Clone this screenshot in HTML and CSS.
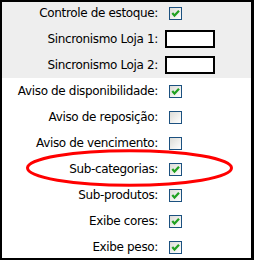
FILE: index.html
```html
<!DOCTYPE html>
<html>
<head>
<meta charset="utf-8">
<link rel="stylesheet" href="styles.css">
</head>
<body>
<div class="frame">
  <div class="sheet">
    <div class="group gray">
      <div class="row"><span class="label">Controle de estoque:</span><span class="cb on"><svg viewBox="0 0 13 13"><polyline points="3.3,6 5.5,8.6 10,3.8"/></svg></span></div>
      <div class="row"><span class="label">Sincronismo Loja 1:</span><span class="txt"></span></div>
      <div class="row"><span class="label">Sincronismo Loja 2:</span><span class="txt"></span></div>
    </div>
    <div class="group">
      <div class="row"><span class="label">Aviso de disponibilidade:</span><span class="cb on"><svg viewBox="0 0 13 13"><polyline points="3.3,6 5.5,8.6 10,3.8"/></svg></span></div>
      <div class="row"><span class="label">Aviso de reposição:</span><span class="cb"></span></div>
      <div class="row"><span class="label">Aviso de vencimento:</span><span class="cb"></span></div>
      <div class="row"><span class="label">Sub-categorias:</span><span class="cb on"><svg viewBox="0 0 13 13"><polyline points="3.3,6 5.5,8.6 10,3.8"/></svg></span></div>
      <div class="row"><span class="label">Sub-produtos:</span><span class="cb on"><svg viewBox="0 0 13 13"><polyline points="3.3,6 5.5,8.6 10,3.8"/></svg></span></div>
      <div class="row"><span class="label">Exibe cores:</span><span class="cb on"><svg viewBox="0 0 13 13"><polyline points="3.3,6 5.5,8.6 10,3.8"/></svg></span></div>
      <div class="row"><span class="label">Exibe peso:</span><span class="cb on"><svg viewBox="0 0 13 13"><polyline points="3.3,6 5.5,8.6 10,3.8"/></svg></span></div>
    </div>
  </div>
  <svg class="mark" width="254" height="260" viewBox="0 0 254 260"><ellipse cx="129.5" cy="168" rx="102" ry="17.2"/></svg>
</div>
</body>
</html>
```
FILE: styles.css
```css
html, body {
  margin: 0;
  padding: 0;
  background: #fff;
}
.frame {
  position: relative;
  width: 254px;
  height: 260px;
  box-sizing: border-box;
  border-style: solid;
  border-color: #000;
  border-width: 2px 3px 2px 2px;
  overflow: hidden;
  font-family: "DejaVu Sans", Verdana, sans-serif;
  font-size: 12px;
  color: #000;
}
.sheet {
  margin-top: -2px;
}
.gray {
  background: #eeeeee;
}
.row {
  display: grid;
  grid-template-columns: 156px 1fr;
  column-gap: 7px;
  align-items: center;
  height: 26px;
}
.label {
  text-align: right;
  white-space: nowrap;
  letter-spacing: -0.35px;
}
.cb {
  display: block;
  width: 13px;
  height: 13px;
  margin-left: 4px;
  box-sizing: border-box;
  border: 1px solid #1c5180;
  background: linear-gradient(135deg, #dcdcd7 0%, #f5f5f3 70%, #ffffff 100%);
}
.cb svg {
  display: block;
  width: 13px;
  height: 13px;
  margin: -1px;
}
.cb polyline {
  fill: none;
  stroke: #21a121;
  stroke-width: 2.2;
}
.txt {
  display: block;
  width: 50px;
  height: 18px;
  box-sizing: border-box;
  border: 2px solid #000;
  background: #fff;
}
.mark {
  position: absolute;
  left: -2px;
  top: -2px;
  pointer-events: none;
}
.mark ellipse {
  fill: none;
  stroke: #f00;
  stroke-width: 3;
}
```
